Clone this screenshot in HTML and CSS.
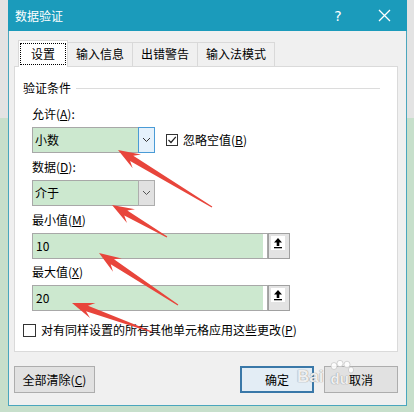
FILE: index.html
```html
<!DOCTYPE html>
<html lang="zh-CN">
<head>
<meta charset="utf-8">
<title>数据验证</title>
<link rel="stylesheet" href="styles.css">
</head>
<body>
<div class="dialog">
  <div class="titlebar">
    <span class="title">数据验证</span>
    <span class="help">?</span>
    <span class="close"><svg width="13" height="13" viewBox="0 0 13 13"><path d="M1 1L12 12M12 1L1 12" stroke="#fff" stroke-width="1.3" fill="none"/></svg></span>
  </div>
  <div class="content">
    <div class="tabs">
      <div class="tab active"><span class="focus">设置</span></div>
      <div class="tab">输入信息</div>
      <div class="tab">出错警告</div>
      <div class="tab">输入法模式</div>
    </div>
    <div class="panel">
      <div class="group-title"><span>验证条件</span><span class="rule"></span></div>
      <div class="fields">
        <div class="label">允许(<u>A</u>):</div>
        <div class="combo-row">
          <div class="combo">
            <span class="value">小数</span>
            <span class="drop hot"><svg width="9" height="6" viewBox="0 0 9 6"><path d="M1 1L4.5 4.5L8 1" stroke="#333" stroke-width="1" fill="none"/></svg></span>
          </div>
          <span class="check checked"><svg width="10" height="10" viewBox="0 0 10 10"><path d="M1.5 5L4 7.5L8.8 1.8" stroke="#222" stroke-width="1.2" fill="none"/></svg></span>
          <span class="check-label">忽略空值(<u>B</u>)</span>
        </div>
        <div class="label gap">数据(<u>D</u>):</div>
        <div class="combo-row">
          <div class="combo">
            <span class="value">介于</span>
            <span class="drop"><svg width="9" height="6" viewBox="0 0 9 6"><path d="M1 1L4.5 4.5L8 1" stroke="#555" stroke-width="1" fill="none"/></svg></span>
          </div>
        </div>
        <div class="label gap">最小值(<u>M</u>)</div>
        <div class="input-row">
          <div class="input-box"><span class="value">10</span></div>
          <span class="pick"><span class="ico"><svg width="12" height="12" viewBox="0 0 12 12"><path d="M6 1L10 5.5H7.3V9H4.7V5.5H2Z" fill="#000"/><rect x="2" y="10" width="8" height="1.3" fill="#000"/></svg></span></span>
        </div>
        <div class="label gap2">最大值(<u>X</u>)</div>
        <div class="input-row">
          <div class="input-box"><span class="value">20</span></div>
          <span class="pick"><span class="ico"><svg width="12" height="12" viewBox="0 0 12 12"><path d="M6 1L10 5.5H7.3V9H4.7V5.5H2Z" fill="#000"/><rect x="2" y="10" width="8" height="1.3" fill="#000"/></svg></span></span>
        </div>
      </div>
      <div class="apply-row">
        <span class="check big"></span>
        <span class="check-label">对有同样设置的所有其他单元格应用这些更改(<u>P</u>)</span>
      </div>
    </div>
    <div class="buttons">
      <button class="btn wide">全部清除(<u>C</u>)</button>
      <span class="spacer"></span>
      <button class="btn default">确定</button>
      <button class="btn">取消</button>
    </div>
  </div>
</div>

<svg class="arrows" width="414" height="412" viewBox="0 0 414 412">
  <polygon points="118,150 132.7,168.2 130.1,160.9 211.7,207.4 212.3,206.6 133.3,155.7 141,154.6" />
  <polygon points="112,205 127,223 124.3,215.6 166.7,237.4 167.3,236.6 127.3,210.4 135,209.2" />
  <polygon points="99,253 113,271.8 110.7,264.3 177.7,305.4 178.3,304.6 114,259.3 121.8,258.4" />
  <polygon points="72,303 90,318 86,311.3 151.8,332.5 152.2,331.5 88,305.7 95.4,303" />
</svg>

<div class="watermark">
  <span class="wm-bai">Bai</span>
  <span class="wm-paw">
    <svg width="26" height="22" viewBox="0 0 26 22"><g fill="#fff" fill-opacity="0.85" stroke="#bbb" stroke-width="0.6"><ellipse cx="6" cy="6" rx="3" ry="3.5"/><ellipse cx="12" cy="3.5" rx="3" ry="3.2"/><ellipse cx="19" cy="4.5" rx="3" ry="3.3"/><ellipse cx="23" cy="10" rx="2.6" ry="3"/></g></svg>
    <span class="wm-du">du</span>
  </span>
</div>
</body>
</html>
```
FILE: styles.css
```css
* { box-sizing: border-box; }

body {
  margin: 0;
  width: 414px;
  height: 412px;
  overflow: hidden;
  position: relative;
  background: linear-gradient(#e3e3e3 0, #e3e3e3 118px, #c7dfcb 118px, #c7dfcb 100%);
  font-family: "Noto Sans CJK SC", "Microsoft YaHei", sans-serif;
  font-size: 12px;
  color: #000;
}

u { text-decoration: underline; text-underline-offset: 1px; }

.dialog {
  margin-left: 8px;
  width: 399px;
  height: 406px;
  background: #f0f0f0;
  border: 1px solid #4aa6bd;
  border-top: 0;
  display: flex;
  flex-direction: column;
}

.titlebar {
  height: 31px;
  background: #1b9bbb;
  color: #fff;
  display: flex;
  align-items: center;
  padding-left: 7px;
  margin: 0 -1px;
}
.title { flex: 1; font-size: 12px; }
.help {
  width: 30px;
  text-align: center;
  font-family: "DejaVu Sans", sans-serif;
  font-size: 14px;
  margin-right: 8px;
}
.close {
  width: 46px;
  height: 31px;
  display: flex;
  align-items: center;
  justify-content: center;
}

.content {
  padding: 9px 8px 0 5px;
}

.tabs {
  display: flex;
  align-items: flex-end;
  height: 26px;
  margin-left: 4px;
}
.tab {
  height: 24px;
  padding: 0 8px;
  border: 1px solid #d9d9d9;
  border-bottom: 0;
  background: #f0f0f0;
  line-height: 22px;
  margin-left: -1px;
  white-space: nowrap;
}
.tab.active {
  position: relative;
  z-index: 1;
  height: 27px;
  margin-bottom: -1px;
  margin-left: 0;
  background: #fff;
  padding: 2px 1px 0 1px;
}
.tab.active .focus {
  display: block;
  height: 22px;
  line-height: 20px;
  padding: 0 10px;
  border: 1px dotted #000;
}

.panel {
  height: 286px;
  background: #fff;
  border: 1px solid #dadada;
  padding: 13px 17px 0 8px;
}

.group-title {
  display: flex;
  align-items: center;
  height: 16px;
  line-height: 16px;
}
.rule {
  flex: 1;
  height: 1px;
  background: #dcdcdc;
  margin-left: 5px;
}

.fields {
  margin-left: 9px;
  margin-top: 10px;
}
.label {
  height: 16px;
  line-height: 16px;
}
.label.gap { margin-top: 6px; }
.label.gap2 { margin-top: 5px; }

.combo-row {
  display: flex;
  align-items: center;
  margin-top: 5px;
}
.combo {
  display: flex;
  width: 123px;
  height: 26px;
}
.combo .value {
  flex: 1;
  border: 1px solid #a8a8a8;
  border-right: 0;
  background: #cce8cf;
  padding-left: 2px;
  line-height: 24px;
}
.drop {
  width: 17px;
  border: 1px solid #adadad;
  background: #e1e1e1;
  display: flex;
  align-items: center;
  justify-content: center;
}
.drop.hot {
  border-color: #4a9bd6;
  background: #e5f1fb;
}

.check {
  width: 12px;
  height: 12px;
  border: 1px solid #333;
  background: #fff;
  display: flex;
  align-items: center;
  justify-content: center;
  margin-left: 11px;
}
.check-label {
  margin-left: 5px;
  line-height: 16px;
}

.input-row {
  display: flex;
  margin-top: 5px;
  height: 26px;
}
.input-box {
  width: 236px;
  border: 1px solid #a8a8a8;
  background: #fff;
  padding-right: 4px;
  display: flex;
}
.input-box .value {
  flex: 1;
  background: #cce8cf;
  padding-left: 3px;
  line-height: 24px;
}
.pick {
  width: 22px;
  height: 26px;
  border: 1px solid #a0a0a0;
  background: #e3e3e3;
  padding: 2px 0 0 2px;
}
.pick .ico {
  display: flex;
  align-items: center;
  justify-content: center;
  width: 14px;
  height: 14px;
  background: #fff;
}

.apply-row {
  display: flex;
  align-items: center;
  margin-top: 11px;
  height: 16px;
}
.check.big {
  width: 13px;
  height: 13px;
  margin-left: 0;
}

.buttons {
  display: flex;
  margin-top: 14px;
  height: 27px;
}
.spacer { flex: 1; }
.btn {
  width: 74px;
  height: 27px;
  border: 1px solid #adadad;
  background: #e1e1e1;
  font: inherit;
  color: #000;
  padding: 0;
  margin-left: 10px;
}
.btn.wide {
  width: 81px;
  margin-left: 0;
}
.btn.default {
  border: 2px solid #3a78a8;
  background: #e3edf5;
}

.arrows {
  position: absolute;
  left: 0;
  top: 0;
  pointer-events: none;
}
.arrows polygon { fill: #e8453b; }

.watermark {
  position: absolute;
  left: 297px;
  top: 360px;
  display: flex;
  align-items: flex-end;
  pointer-events: none;
}
.wm-bai {
  font-family: "Liberation Sans", sans-serif;
  font-weight: bold;
  font-size: 17px;
  color: rgba(255, 255, 255, 0.85);
  text-shadow: 0 0 1px #999, 0 0 1px #999;
  line-height: 26px;
}
.wm-paw {
  position: relative;
  width: 26px;
  height: 30px;
  margin-left: 5px;
}
.wm-paw svg { position: absolute; left: 0; top: 0; }
.wm-du {
  position: absolute;
  left: 2px;
  top: 11px;
  font-family: "Liberation Sans", sans-serif;
  font-weight: bold;
  font-size: 15px;
  color: rgba(255, 255, 255, 0.85);
  text-shadow: 0 0 1px #999, 0 0 1px #999;
  line-height: 16px;
}
```
